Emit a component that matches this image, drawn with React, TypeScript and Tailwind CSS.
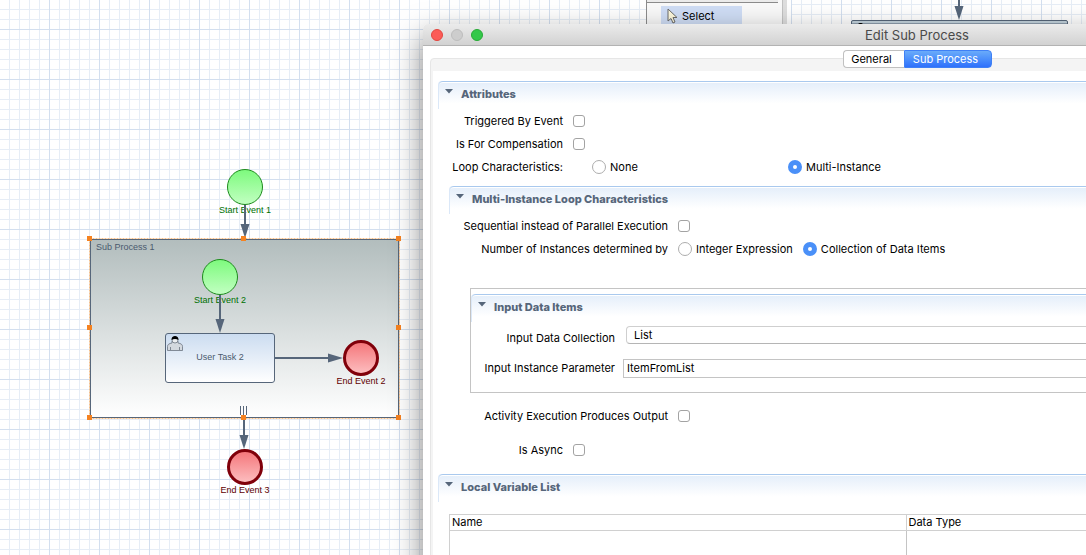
import { useId, useState, type ReactNode } from 'react';

const INK = '#56667a';

type EventNodeProps = {
  cx: number;
  cy: number;
  label: string;
};

const StartEvent = ({ cx, cy, label }: EventNodeProps) => (
  <g>
    <circle cx={cx} cy={cy} r={17.5} fill="url(#startFill)" stroke="#1e8a1e" />
    <text x={cx} y={cy + 26} textAnchor="middle" fill="#007000">
      {label}
    </text>
  </g>
);

const EndEvent = ({ cx, cy, label }: EventNodeProps) => (
  <g>
    <circle
      cx={cx}
      cy={cy}
      r={16.5}
      fill="url(#endFill)"
      stroke="#80000a"
      strokeWidth={3}
    />
    <text x={cx} y={cy + 26} textAnchor="middle" fill="#600000">
      {label}
    </text>
  </g>
);

type FlowProps = { x: number; from: number; to: number };

const DownFlow = ({ x, from, to }: FlowProps) => (
  <g>
    <path d={`M${x} ${from}V${to - 8}`} stroke={INK} strokeWidth={2} />
    <path d={`M${x - 4.5} ${to - 14}h9L${x} ${to}z`} fill={INK} />
  </g>
);

const HANDLES = [
  [89, 238],
  [243, 238],
  [398, 238],
  [89, 327],
  [398, 327],
  [89, 417],
  [243, 417],
  [398, 417],
];

const ProcessDiagram = () => (
  <svg
    width={646}
    height={555}
    className="block font-['Liberation_Sans',sans-serif] text-[9px]"
  >
    <defs>
      <linearGradient id="startFill" x1="0" y1="0" x2="0" y2="1">
        <stop offset="0" stopColor="#7dfa7d" />
        <stop offset="1" stopColor="#c2ffc2" />
      </linearGradient>
      <linearGradient id="endFill" x1="0" y1="0" x2="0" y2="1">
        <stop offset="0" stopColor="#f47478" />
        <stop offset="1" stopColor="#fdc0c2" />
      </linearGradient>
      <linearGradient id="subFill" x1="0" y1="0" x2="0" y2="1">
        <stop offset="0" stopColor="#b2bdbd" />
        <stop offset="1" stopColor="#ffffff" />
      </linearGradient>
      <linearGradient id="taskFill" x1="0" y1="0" x2="0" y2="1">
        <stop offset="0" stopColor="#cbdcf0" />
        <stop offset="1" stopColor="#ffffff" />
      </linearGradient>
    </defs>

    <StartEvent cx={245} cy={187} label="Start Event 1" />
    <DownFlow x={245} from={205} to={238} />

    {/* sub process */}
    <rect
      x={90.5}
      y={239.5}
      width={308}
      height={178}
      fill="url(#subFill)"
      stroke={INK}
    />
    <rect
      x={89.5}
      y={238.5}
      width={310}
      height={180}
      fill="none"
      stroke="#f8c088"
      strokeDasharray="2 1"
    />
    <text x={96} y={250} fill="#4a5a6e">
      Sub Process 1
    </text>
    <StartEvent cx={220} cy={277} label="Start Event 2" />
    <DownFlow x={220} from={295} to={333} />

    <rect
      x={165.5}
      y={333.5}
      width={109}
      height={49}
      rx={2.5}
      fill="url(#taskFill)"
      stroke={INK}
    />
    <path
      d="M167.5 350.5v-4c0-2 1.500-3 4.500-3.500v-2h6v2c3 .5 4.500 1.500 4.500 3.500v4z"
      fill="#d3d8de"
      stroke="#6b7480"
      strokeWidth={0.8}
    />
    <path d="M170.500 350v-3M179.500 350v-3" stroke="#6b7480" strokeWidth={0.8} />
    <circle cx={175} cy={340} r={3} fill="#eceef0" stroke="#6b7480" strokeWidth={0.8} />
    <path d="M171.500 340c-.5-5.500 7.500-5.500 7 0-2-1.500-5-1.500-7 0z" fill="#000" />
    <text x={220} y={360} textAnchor="middle" fill="#4a5a6e">
      User Task 2
    </text>

    <path d="M275 358H334" stroke={INK} strokeWidth={2} />
    <path d="M328 353.500v9L343 358z" fill={INK} />
    <EndEvent cx={361} cy={358} label="End Event 2" />

    {/* parallel multi-instance marker */}
    <path d="M240.500 406v9M243.500 406v9M246.500 406v9" stroke={INK} />

    <DownFlow x={244} from={419} to={449} />
    <EndEvent cx={245} cy={467} label="End Event 3" />

    {HANDLES.map(([x, y]) => (
      <rect
        key={`${x}-${y}`}
        x={x - 2}
        y={y - 2}
        width={5}
        height={5}
        fill="#f58220"
      />
    ))}
  </svg>
);

const Palette = () => (
  <aside className="flex w-[136px] shrink-0 flex-col border-l border-[#8c8c8c] bg-[#f9f9f9]">
    <div className="mr-1 h-[3px] border-b border-[#8c8c8c] bg-[#ececec]" />
    <button
      type="button"
      className="mt-[3px] ml-3.5 flex h-[19px] w-[81px] items-center bg-[#cfddf5] pl-1.5 text-[11px]"
    >
      <svg width="11" height="16" viewBox="0 0 11 16" className="mr-1">
        <path
          d="M1 1v12l3-2.500 2 4.500 2-1-2-4.500h4z"
          fill="#fdf8dc"
          stroke="#6a6a6a"
        />
      </svg>
      Select
    </button>
  </aside>
);

const SideDiagram = () => (
  <svg width={295} height={24} className="block">
    <path
      d="M60.500 24v-2q0-1.500 1.500-1.500h213q1.500 0 1.500 1.500v2z"
      fill="#c3d3dd"
      stroke={INK}
    />
    <path d="M67 24c1-1.500 4-1.500 5 0z" fill="#000" />
    <DownFlow x={168} from={0} to={20} />
  </svg>
);

type SectionProps = { title: string; children: ReactNode };

const Section = ({ title, children }: SectionProps) => (
  <section>
    <header className="flex h-7 rounded-tl border-t border-[#a9c9ee] bg-linear-to-b from-[#e4eefa] to-white to-80% bg-clip-content pt-px shadow-[-1px_0_0_#dbe8f8]">
      <svg width="9" height="5" className="mt-1.5 ml-1.5">
        <path d="M0 0h8L4 4.500z" fill={INK} />
      </svg>
      <h2 className="mt-[3px] ml-[7px] text-[11px] leading-4 font-extrabold text-[#56667a]">
        {title}
      </h2>
    </header>
    {children}
  </section>
);

type CheckRowProps = { label: string; labelClass: string };

const CheckRow = ({ label, labelClass }: CheckRowProps) => {
  const id = useId();

  return (
    <div className="flex h-[23px] items-center gap-2.5">
      <label htmlFor={id} className={`text-right ${labelClass}`}>
        {label}
      </label>
      <input
        id={id}
        type="checkbox"
        className="size-3 appearance-none rounded-[3px] border border-[#a3a3a3] bg-white checked:bg-[#4a90f8]"
      />
    </div>
  );
};

type RadioProps = {
  name: string;
  label: string;
  checked: boolean;
  onChange: () => void;
};

const Radio = ({ name, label, checked, onChange }: RadioProps) => (
  <label className="flex items-center gap-1">
    <input
      type="radio"
      name={name}
      checked={checked}
      onChange={onChange}
      className="size-3.5 appearance-none rounded-full border border-[#adadad] bg-white checked:border-5 checked:border-[#4a90f8]"
    />
    {label}
  </label>
);

const EditDialog = () => {
  const [loop, setLoop] = useState('multi');
  const [source, setSource] = useState('collection');
  const [parameter, setParameter] = useState('ItemFromList');

  return (
    <div
      role="dialog"
      aria-label="Edit Sub Process"
      className="absolute top-6 left-[423px] w-[988px] rounded-t-[5px] bg-white shadow-[0_12px_30px_rgba(0,0,0,0.5)]"
    >
      <div className="relative flex h-[22px] items-center gap-2 rounded-t-[5px] border-b border-[#b3b3b3] bg-linear-to-b from-[#ebebeb] to-[#d2d2d2] pl-2">
        <button
          type="button"
          aria-label="Close"
          className="size-3 rounded-full border border-[#e2463f] bg-[#fc5b57]"
        />
        <button
          type="button"
          aria-label="Minimize"
          className="size-3 rounded-full border border-[#bdbdbd] bg-[#cdcdcd]"
        />
        <button
          type="button"
          aria-label="Zoom"
          className="size-3 rounded-full border border-[#27aa35] bg-[#34c84a]"
        />
        <h1 className="pointer-events-none absolute inset-0 text-center text-[13px] leading-[22px] text-[#4a4a4a]">
          Edit Sub Process
        </h1>
      </div>

      <div className="px-[7px] pt-3">
        <div className="rounded-t border border-[#e6e6e6] bg-[#f4f4f4] px-0.5">
          <div className="-mt-[9px] mb-[3px] flex h-[18px] justify-center leading-[15px]">
            <button
              type="button"
              className="w-[61px] rounded-l border border-r-0 border-[#c0c0c0] bg-white pr-1"
            >
              General
            </button>
            <button
              type="button"
              className="w-[88px] rounded-r border border-[#3f80f5] bg-linear-to-b from-[#6aabfa] to-[#2f70fb] pr-1 text-white"
            >
              Sub Process
            </button>
          </div>

          <div className="bg-white px-1.5 pt-2.5">
            <Section title="Attributes">
              <CheckRow label="Triggered By Event" labelClass="w-31" />
              <CheckRow label="Is For Compensation" labelClass="w-31" />
              <div className="flex h-[23px] items-center">
                <span className="w-31 text-right">Loop Characteristics:</span>
                <div className="ml-[29px] grid grid-cols-[196px_196px]">
                  <Radio
                    name="loop"
                    label="None"
                    checked={loop === 'none'}
                    onChange={() => setLoop('none')}
                  />
                  <Radio
                    name="loop"
                    label="Multi-Instance"
                    checked={loop === 'multi'}
                    onChange={() => setLoop('multi')}
                  />
                </div>
              </div>

              <div className="mt-2 ml-[11px]">
                <Section title="Multi-Instance Loop Characteristics">
                  <CheckRow
                    label="Sequential instead of Parallel Execution"
                    labelClass="w-[218px]"
                  />
                  <div className="flex h-[23px] items-center gap-2.5">
                    <span className="w-[218px] text-right">
                      Number of Instances determined by
                    </span>
                    <Radio
                      name="source"
                      label="Integer Expression"
                      checked={source === 'integer'}
                      onChange={() => setSource('integer')}
                    />
                    <Radio
                      name="source"
                      label="Collection of Data Items"
                      checked={source === 'collection'}
                      onChange={() => setSource('collection')}
                    />
                  </div>

                  <div className="mt-7 ml-5 border border-[#c4c4c4] pt-[5px] pb-2.5 pl-px">
                    <Section title="Input Data Items">
                      <div className="flex h-7 items-center gap-[11px] pt-[3px]">
                        <label
                          htmlFor="collection"
                          className="w-[143px] text-right"
                        >
                          Input Data Collection
                        </label>
                        <select
                          id="collection"
                          className="mb-1.5 h-[18px] flex-1 appearance-none rounded border border-[#cfcfcf] border-b-[#b5b5b5] bg-white px-[7px]"
                        >
                          <option>List</option>
                        </select>
                      </div>
                      <div className="mt-1 flex h-7 items-center gap-2">
                        <label
                          htmlFor="parameter"
                          className="w-[143px] text-right"
                        >
                          Input Instance Parameter
                        </label>
                        <input
                          id="parameter"
                          value={parameter}
                          onChange={(e) => setParameter(e.target.value)}
                          className="h-[19px] flex-1 border border-[#c4c4c4] bg-white px-[3px]"
                        />
                      </div>
                    </Section>
                  </div>

                  <div className="mt-[11px]">
                    <CheckRow
                      label="Activity Execution Produces Output"
                      labelClass="w-[218px]"
                    />
                  </div>
                </Section>
              </div>

              <div className="mt-[11px] mb-[13px]">
                <CheckRow label="Is Async" labelClass="w-31" />
              </div>
            </Section>

            <Section title="Local Variable List">
              <div className="mt-3 ml-2.5 border border-[#d0d0d0]">
                <table className="w-full table-fixed border-collapse">
                  <thead>
                    <tr className="border-b border-[#d0d0d0] text-left leading-[15px]">
                      <th className="w-[456px] border-r border-[#d0d0d0] px-0.5 font-normal">
                        Name
                      </th>
                      <th className="px-0.5 font-normal">Data Type</th>
                    </tr>
                  </thead>
                  <tbody>
                    <tr className="h-24">
                      <td className="border-r border-[#c4c4c4]" />
                      <td />
                    </tr>
                  </tbody>
                </table>
              </div>
            </Section>
          </div>
        </div>
      </div>
    </div>
  );
};

export default function App() {
  return (
    <div className="relative h-screen overflow-hidden bg-white font-['Inter',sans-serif] text-[11px] leading-4 text-black">
      <div className="flex h-full">
        <main className="w-[646px] shrink-0 bg-[linear-gradient(#d3dfef_1px,transparent_1px),linear-gradient(90deg,#d3dfef_1px,transparent_1px),linear-gradient(#e6edf6_1px,transparent_1px),linear-gradient(90deg,#e6edf6_1px,transparent_1px)] bg-size-[50px_50px,50px_50px,10px_10px,10px_10px] bg-position-[49px_29px,49px_29px,9px_9px,9px_9px]">
          <ProcessDiagram />
        </main>
        <Palette />
        <div className="w-[9px] shrink-0 border-r-4 border-l border-r-white border-l-[#c2c2c2] bg-[#dedede]" />
        <div className="min-w-0 flex-1 bg-[linear-gradient(90deg,#d3dfef_1px,transparent_1px),linear-gradient(#e6edf6_1px,transparent_1px),linear-gradient(90deg,#e6edf6_1px,transparent_1px)] bg-size-[50px_50px,10px_10px,10px_10px] bg-position-[0px_0px,0px_4px,0px_0px]">
          <SideDiagram />
        </div>
      </div>
      <EditDialog />
    </div>
  );
}
